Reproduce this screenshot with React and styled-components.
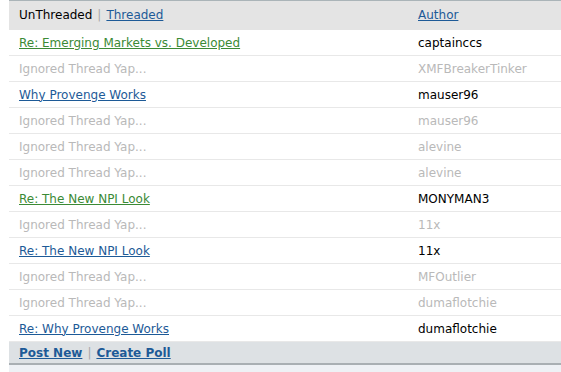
import styled, { createGlobalStyle } from "styled-components";

const GlobalStyle = createGlobalStyle`
    html, body {
        margin: 0;
        padding: 0;
        background: #ffffff;
    }
    body {
        font-family: "DejaVu Sans", Verdana, sans-serif;
        font-size: 12px;
    }
`;

const Page = styled.div`
    padding-left: 9px;
    height: 372px;
    overflow: hidden;
`;

const Table = styled.div`
    border-top: 1px solid #aab4b8;
    display: flex;
    flex-direction: column;
`;

const Row = styled.div`
    display: grid;
    grid-template-columns: 399px 1fr;
    height: ${(p) => (p.$header ? "29px" : "26px")};
    align-items: center;
    border-bottom: 1px solid ${(p) => (p.$header ? "#e4e4e4" : "#e8e8e8")};
    background: ${(p) => (p.$header ? "#e4e4e4" : "#ffffff")};
    box-sizing: border-box;
    flex-shrink: 0;
`;

const Cell = styled.div`
    padding-left: 10px;
    white-space: nowrap;
    color: ${(p) => (p.$ignored ? "#b9b9b9" : "#000000")};
`;

const Link = styled.a`
    color: ${(p) => (p.$green ? "#3b8a35" : "#1d5a97")};
    text-decoration: underline;
    font-weight: ${(p) => (p.$bold ? "bold" : "normal")};
    cursor: pointer;
`;

const Sep = styled.span`
    color: #a8a8a8;
    margin: 0 5px;
`;

const Footer = styled.div`
    background: #dde1e4;
    height: 21px;
    display: flex;
    align-items: center;
    padding-left: 10px;
    border-bottom: 2px solid #a9afb3;
    flex-shrink: 0;
`;

const Below = styled.div`
    background: #eef1f5;
    height: 20px;
`;

const rows = [
    { title: "Re: Emerging Markets vs. Developed", author: "captainccs", green: true },
    { ignored: true, author: "XMFBreakerTinker" },
    { title: "Why Provenge Works", author: "mauser96" },
    { ignored: true, author: "mauser96" },
    { ignored: true, author: "alevine" },
    { ignored: true, author: "alevine" },
    { title: "Re: The New NPI Look", author: "MONYMAN3", green: true },
    { ignored: true, author: "11x" },
    { title: "Re: The New NPI Look", author: "11x" },
    { ignored: true, author: "MFOutlier" },
    { ignored: true, author: "dumaflotchie" },
    { title: "Re: Why Provenge Works", author: "dumaflotchie" },
];

export default function App() {
    return (
        <Page>
            <GlobalStyle />
            <Table>
                <Row $header>
                    <Cell>
                        UnThreaded<Sep>|</Sep>
                        <Link>Threaded</Link>
                    </Cell>
                    <Cell>
                        <Link>Author</Link>
                    </Cell>
                </Row>
                {rows.map((r, i) => (
                    <Row key={i}>
                        <Cell $ignored={r.ignored}>
                            {r.ignored ? "Ignored Thread Yap..." : <Link $green={r.green}>{r.title}</Link>}
                        </Cell>
                        <Cell $ignored={r.ignored}>{r.author}</Cell>
                    </Row>
                ))}
                <Footer>
                    <Link $bold>Post New</Link>
                    <Sep>|</Sep>
                    <Link $bold>Create Poll</Link>
                </Footer>
                <Below />
            </Table>
        </Page>
    );
}
